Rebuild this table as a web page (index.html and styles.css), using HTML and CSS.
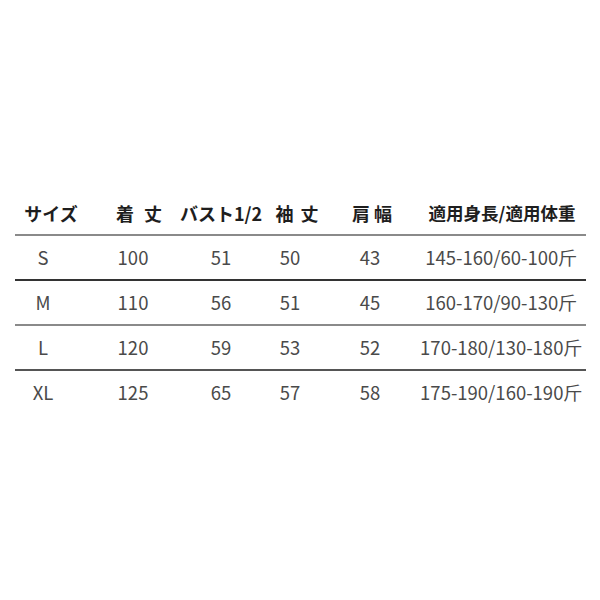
FILE: index.html
```html
<!DOCTYPE html>
<html lang="ja">
<head>
<meta charset="utf-8">
<link rel="stylesheet" href="styles.css">
</head>
<body>
<div class="page">
  <div class="table">
    <div class="row head line-gray">
      <div class="cell c1 h1">サイズ</div>
      <div class="cell c2 h2">着 丈</div>
      <div class="cell c3">バスト1/2</div>
      <div class="cell c4 h4">袖 丈</div>
      <div class="cell c5 h5">肩 幅</div>
      <div class="cell c6 h6">適用身長/適用体重</div>
    </div>
    <div class="row data line-dark">
      <div class="cell c1">S</div>
      <div class="cell c2">100</div>
      <div class="cell c3">51</div>
      <div class="cell c4">50</div>
      <div class="cell c5">43</div>
      <div class="cell c6">145-160/60-100斤</div>
    </div>
    <div class="row data line-gray">
      <div class="cell c1">M</div>
      <div class="cell c2">110</div>
      <div class="cell c3">56</div>
      <div class="cell c4">51</div>
      <div class="cell c5">45</div>
      <div class="cell c6">160-170/90-130斤</div>
    </div>
    <div class="row data line-mid">
      <div class="cell c1">L</div>
      <div class="cell c2">120</div>
      <div class="cell c3">59</div>
      <div class="cell c4">53</div>
      <div class="cell c5">52</div>
      <div class="cell c6">170-180/130-180斤</div>
    </div>
    <div class="row data">
      <div class="cell c1">XL</div>
      <div class="cell c2">125</div>
      <div class="cell c3">65</div>
      <div class="cell c4">57</div>
      <div class="cell c5">58</div>
      <div class="cell c6">175-190/160-190斤</div>
    </div>
  </div>
</div>
</body>
</html>
```
FILE: styles.css
```css
html, body {
  margin: 0;
  padding: 0;
  background: #ffffff;
}
body {
  width: 600px;
  height: 600px;
  overflow: hidden;
  font-family: "Noto Sans CJK JP", "Noto Sans", sans-serif;
}
.page {
  padding-top: 191px;
  padding-left: 15px;
  width: 571px;
}
.table {
  display: flex;
  flex-direction: column;
}
.row {
  display: grid;
  grid-template-columns: 56px 124px 52px 86px 74px 188px;
  align-items: center;
  height: 43px;
}
.line-gray { border-bottom: 2px solid #8a8a8a; }
.line-dark { border-bottom: 2px solid #333333; }
.line-mid { border-bottom: 2px solid #555555; }
.cell {
  justify-self: center;
  white-space: nowrap;
  line-height: 1;
}
.head .cell {
  font-size: 18px;
  font-weight: 700;
  color: #1e1e1e;
}
.data .cell {
  font-size: 18.5px;
  font-weight: 400;
  color: #4a4a4a;
}
.head .h1 { transform: translateX(8px); }
.head .h2 { transform: translateX(6px); word-spacing: 6px; }
.head .h4 { transform: translateX(7px); word-spacing: 3px; }
.head .h5 { transform: translateX(2px); }
.head .h6 { transform: translateX(1px); font-size: 17.5px; }
```
